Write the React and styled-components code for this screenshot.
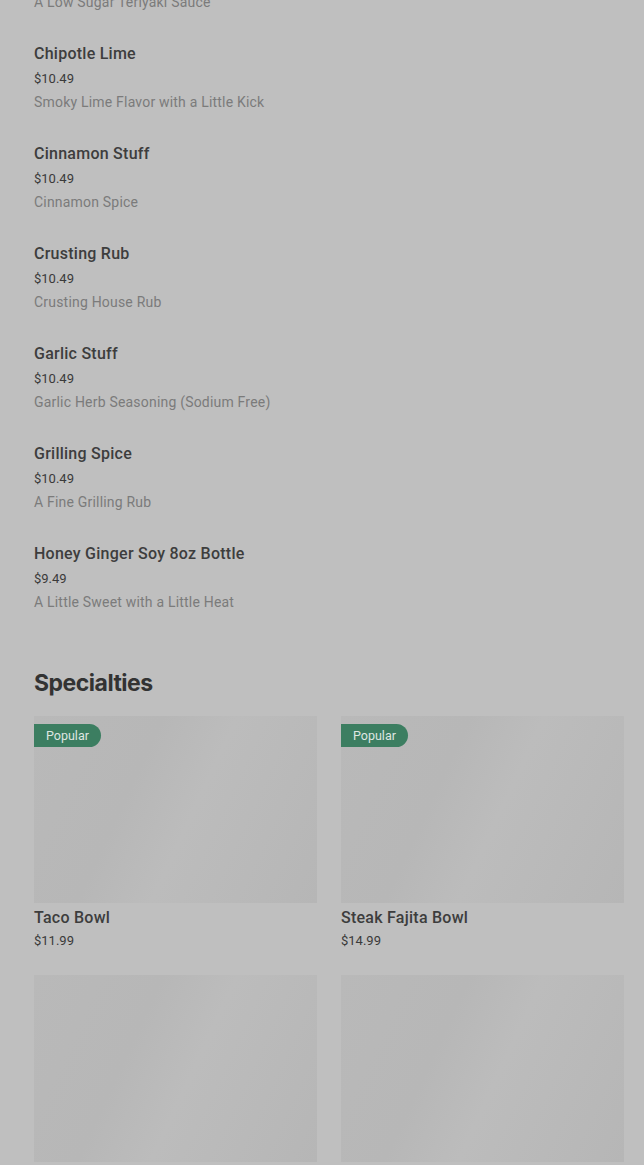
import React from 'react';
import styled, { createGlobalStyle } from 'styled-components';

const GlobalStyle = createGlobalStyle`
  html, body {
    margin: 0;
    padding: 0;
    background: #bfbfbf;
    font-family: Roboto, 'Liberation Sans', sans-serif;
    overflow: hidden;
  }
`;

const Page = styled.div`
  width: 644px;
  height: 1165px;
  overflow: hidden;
  background: #bfbfbf;
`;

const List = styled.ul`
  list-style: none;
  margin: -57px 0 0;
  padding: 0 34px;
`;

const Item = styled.li`
  display: flex;
  flex-direction: column;
  gap: 4px;
  margin-bottom: 31px;
`;

const ItemName = styled.div`
  font-size: 16px;
  line-height: 22px;
  font-weight: 500;
  letter-spacing: 0.25px;
  color: #3d3d3d;
`;

const Price = styled.div`
  font-size: 13px;
  line-height: 20px;
  color: #3a3a3a;
`;

const Desc = styled.div`
  margin-top: -1px;
  font-size: 14px;
  line-height: 20px;
  letter-spacing: 0.2px;
  color: #7b7b7b;
`;

const Section = styled.section`
  padding: 24px 20px 0 34px;
`;

const Heading = styled.h2`
  margin: 0 0 17px;
  font-family: Inter, Roboto, sans-serif;
  font-size: 23px;
  line-height: 32px;
  font-weight: 700;
  letter-spacing: -0.5px;
  color: #333;
`;

const Grid = styled.div`
  display: grid;
  grid-template-columns: 283px 283px;
  column-gap: 24px;
  row-gap: 24px;
`;

const Card = styled.div`
  display: flex;
  flex-direction: column;
`;

const Thumb = styled.div`
  position: relative;
  height: 187px;
  background: linear-gradient(115deg, #b9b9b9 0%, #b7b7b7 35%, #bcbcbc 55%, #b6b6b6 100%);
`;

const Badge = styled.span`
  position: absolute;
  top: 8px;
  left: 0;
  height: 23px;
  padding: 0 12px;
  display: flex;
  align-items: center;
  border-radius: 0 12px 12px 0;
  background: #3c7e61;
  color: #dfe6e2;
  font-size: 12.5px;
`;

const CardName = styled.div`
  margin-top: 4px;
  font-size: 16px;
  line-height: 22px;
  font-weight: 500;
  letter-spacing: 0.25px;
  color: #3d3d3d;
`;

const CardPrice = styled(Price)`
  margin-top: 2px;
`;

const sauces = [
  { name: 'Low Sugar Teriyaki', price: '$10.49', desc: 'A Low Sugar Teriyaki Sauce' },
  { name: 'Chipotle Lime', price: '$10.49', desc: 'Smoky Lime Flavor with a Little Kick' },
  { name: 'Cinnamon Stuff', price: '$10.49', desc: 'Cinnamon Spice' },
  { name: 'Crusting Rub', price: '$10.49', desc: 'Crusting House Rub' },
  { name: 'Garlic Stuff', price: '$10.49', desc: 'Garlic Herb Seasoning (Sodium Free)' },
  { name: 'Grilling Spice', price: '$10.49', desc: 'A Fine Grilling Rub' },
  { name: 'Honey Ginger Soy 8oz Bottle', price: '$9.49', desc: 'A Little Sweet with a Little Heat' },
];

const specialties = [
  { name: 'Taco Bowl', price: '$11.99', popular: true },
  { name: 'Steak Fajita Bowl', price: '$14.99', popular: true },
  { name: 'Chicken Bowl', price: '$12.99' },
  { name: 'Veggie Bowl', price: '$10.99' },
];

const App = () => {
  return (
    <Page>
      <GlobalStyle />
      <List>
        {sauces.map((s) => (
          <Item key={s.name}>
            <ItemName>{s.name}</ItemName>
            <Price>{s.price}</Price>
            <Desc>{s.desc}</Desc>
          </Item>
        ))}
      </List>
      <Section>
        <Heading>Specialties</Heading>
        <Grid>
          {specialties.map((c) => (
            <Card key={c.name}>
              <Thumb>{c.popular && <Badge>Popular</Badge>}</Thumb>
              <CardName>{c.name}</CardName>
              <CardPrice>{c.price}</CardPrice>
            </Card>
          ))}
        </Grid>
      </Section>
    </Page>
  );
};

export default App;
